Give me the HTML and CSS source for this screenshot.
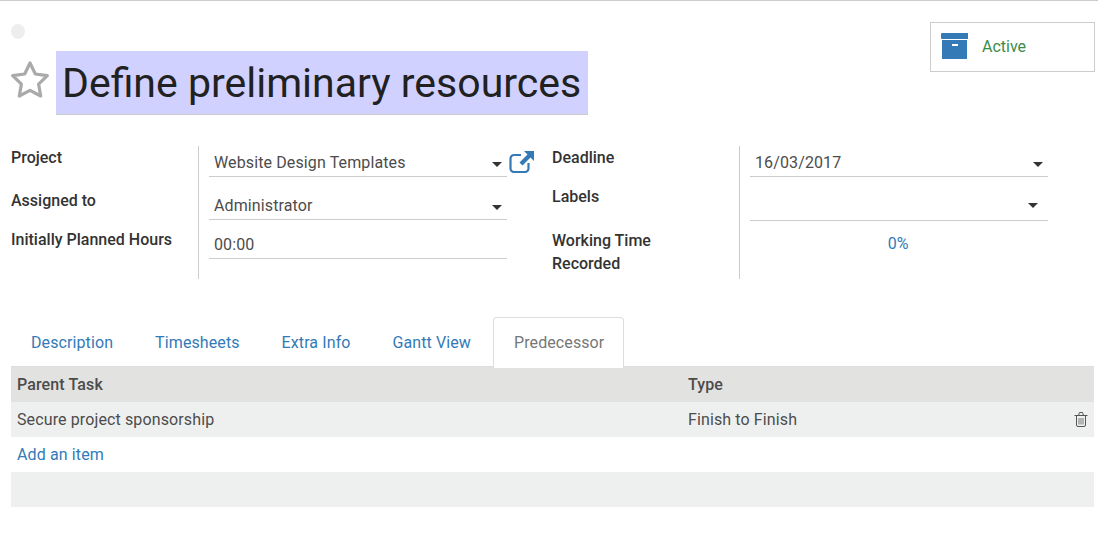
FILE: index.html
```html
<!DOCTYPE html>
<html lang="en">
<head>
    <meta charset="UTF-8">
    <title>Define preliminary resources</title>
    <link rel="stylesheet" href="styles.css">
</head>
<body>
    <div class="sheet">
        <header class="task-head">
            <div class="title-block">
                <span class="kanban-dot"></span>
                <div class="title-row">
                    <svg class="star" width="40" height="38" viewBox="0 0 40 38">
                        <path d="M20 3l5.300 11 12 1.700-8.700 8.400 2.100 11.900L20 30.300 9.300 36l2.100-11.900-8.700-8.400 12-1.700z" fill="none" stroke="#aaa" stroke-width="3.200" stroke-linejoin="round"/>
                    </svg>
                    <h1 class="task-title">Define preliminary resources</h1>
                </div>
            </div>
            <div class="stat-button">
                <svg width="27" height="26" viewBox="0 0 27 26">
                    <rect x="0" y="0" width="28" height="6" rx="1" fill="#337ab7"/>
                    <path d="M1 7h25v19H1z" fill="#337ab7"/>
                    <rect x="11" y="11" width="6" height="2" fill="#fff"/>
                </svg>
                <span class="stat-text">Active</span>
            </div>
        </header>

        <section class="fields">
            <div class="group group-left">
                <div class="label">Project</div>
                <div class="value">
                    <div class="field">Website Design Templates<span class="caret"></span></div>
                    <svg class="ext-link" width="26" height="23" viewBox="0 0 26 23">
                        <path d="M12 5H5a3.500 3.500 0 0 0-3.500 3.500v10A3.500 3.500 0 0 0 5 22h11a3.500 3.500 0 0 0 3.500-3.500V13" fill="none" stroke="#337ab7" stroke-width="2.200"/>
                        <path d="M15 1h10v10l-3.500-3.500-8 8-3-3 8-8z" fill="#337ab7"/>
                    </svg>
                </div>
                <div class="label">Assigned to</div>
                <div class="value">
                    <div class="field">Administrator<span class="caret"></span></div>
                </div>
                <div class="label">Initially Planned Hours</div>
                <div class="value">
                    <div class="field">00:00</div>
                </div>
            </div>

            <div class="group group-right">
                <div class="label">Deadline</div>
                <div class="value">
                    <div class="field">16/03/2017<span class="caret"></span></div>
                </div>
                <div class="label">Labels</div>
                <div class="value">
                    <div class="field field-tags"><span class="caret"></span></div>
                </div>
                <div class="label">Working Time Recorded</div>
                <div class="value">
                    <div class="progress">0%</div>
                </div>
            </div>
        </section>

        <nav class="tabs">
            <a class="tab">Description</a>
            <a class="tab">Timesheets</a>
            <a class="tab">Extra Info</a>
            <a class="tab">Gantt View</a>
            <a class="tab tab-active">Predecessor</a>
        </nav>

        <table class="lines">
            <thead>
                <tr>
                    <th class="col-task">Parent Task</th>
                    <th>Type</th>
                    <th class="col-del"></th>
                </tr>
            </thead>
            <tbody>
                <tr class="line">
                    <td>Secure project sponsorship</td>
                    <td>Finish to Finish</td>
                    <td class="col-del">
                        <svg class="trash" width="14" height="15" viewBox="0 0 14 15">
                            <path d="M.5 3.500h13M2.500 3.500v9.500a1.500 1.500 0 0 0 1.500 1.500h6a1.500 1.500 0 0 0 1.500-1.500V3.500M4.500 3.500l1-3h3l1 3" fill="none" stroke="#555" stroke-width="1"/>
                            <path d="M5 6v6.500M7 6v6.500M9 6v6.500" stroke="#777" stroke-width="1"/>
                        </svg>
                    </td>
                </tr>
                <tr class="add-row">
                    <td colspan="3"><a class="add-item">Add an item</a></td>
                </tr>
            </tbody>
            <tfoot>
                <tr class="foot">
                    <td colspan="3"></td>
                </tr>
            </tfoot>
        </table>
    </div>
</body>
</html>
```

FILE: styles.css
```css
body {
    margin: 0;
    font-family: Roboto, sans-serif;
    font-size: 16px;
    color: #4c4c4c;
    background-color: white;
}

.sheet {
    border-top: 1px solid #ccc;
    height: 541px;
    padding: 0 4px 0 11px;
}

.task-head {
    display: flex;
    justify-content: space-between;
    height: 145px;
}

.title-block {
    padding-top: 23px;
}

.kanban-dot {
    display: block;
    width: 14px;
    height: 15px;
    border-radius: 50%;
    background-color: #eeeeee;
}

.title-row {
    display: flex;
    align-items: center;
    margin-top: 12px;
}

.star {
    margin-left: -1px;
    margin-right: 6px;
    margin-top: -8px;
}

.task-title {
    margin: 0;
    padding: 0 7px 0 6px;
    height: 63px;
    line-height: 65px;
    font-size: 41px;
    font-weight: 400;
    color: #212121;
    background-color: #d1d1ff;
    border-bottom: 1px solid #ccc;
}

.stat-button {
    display: flex;
    align-items: center;
    box-sizing: border-box;
    width: 165px;
    height: 50px;
    margin-top: 21px;
    margin-right: -1px;
    padding-left: 10px;
    padding-bottom: 2px;
    border: 1px solid #ccc;
}

.stat-text {
    margin-left: 14px;
    color: #3c8b4c;
}

.fields {
    display: flex;
    height: 133px;
}

.group {
    display: grid;
    grid-template-columns: 187px 1fr;
}

.group-left {
    width: 541px;
    grid-template-rows: 43px 39px 51px;
}

.group-right {
    width: 497px;
    grid-template-rows: 39px 44px 50px;
}

.label {
    line-height: 23px;
    font-weight: 500;
    color: #333;
}

.group-right .label {
    padding-right: 60px;
}

.value {
    display: flex;
    align-items: flex-start;
    padding-left: 10px;
    border-left: 1px solid #ccc;
}

.field {
    display: flex;
    align-items: center;
    justify-content: space-between;
    box-sizing: border-box;
    flex: none;
    width: 298px;
    height: 26px;
    margin-top: 5px;
    padding: 0 5px 2px;
    border-bottom: 1px solid #ccc;
    letter-spacing: 0.12px;
}

.field-tags {
    justify-content: flex-end;
    height: 31px;
    padding-right: 10px;
}

.caret {
    width: 0;
    height: 0;
    border-top: 5px solid #333;
    border-left: 5px solid transparent;
    border-right: 5px solid transparent;
    margin-top: 3px;
}

.ext-link {
    margin-left: 2px;
    margin-top: 4px;
}

.progress {
    width: 296px;
    margin-top: 5px;
    text-align: center;
    color: #337ab7;
}

.tabs {
    display: flex;
    gap: 2px;
    margin-top: 38px;
    height: 49px;
    border-bottom: 1px solid #ddd;
}

.tab {
    padding: 0 20px;
    line-height: 51px;
    letter-spacing: 0.1px;
    color: #337ab7;
}

.tab-active {
    padding-right: 19px;
    color: #777;
    background-color: white;
    border: 1px solid #ddd;
    border-bottom: none;
    border-radius: 4px 4px 0 0;
    height: 50px;
    line-height: 49px;
}

.lines {
    width: 1083px;
    border-collapse: collapse;
    table-layout: fixed;
}

.lines th,
.lines td {
    height: 35px;
    padding: 0 6px;
    text-align: left;
    letter-spacing: 0.12px;
}

.lines th {
    font-weight: 500;
    color: #4c4c4c;
    background-color: #e2e2e0;
}

.col-task {
    width: 659px;
}

.lines .col-del {
    width: 14px;
}

.line td {
    background-color: #eef0ef;
}

.trash {
    display: block;
}

.add-item {
    color: #337ab7;
}

.foot td {
    background-color: #eef0ef;
}
```
